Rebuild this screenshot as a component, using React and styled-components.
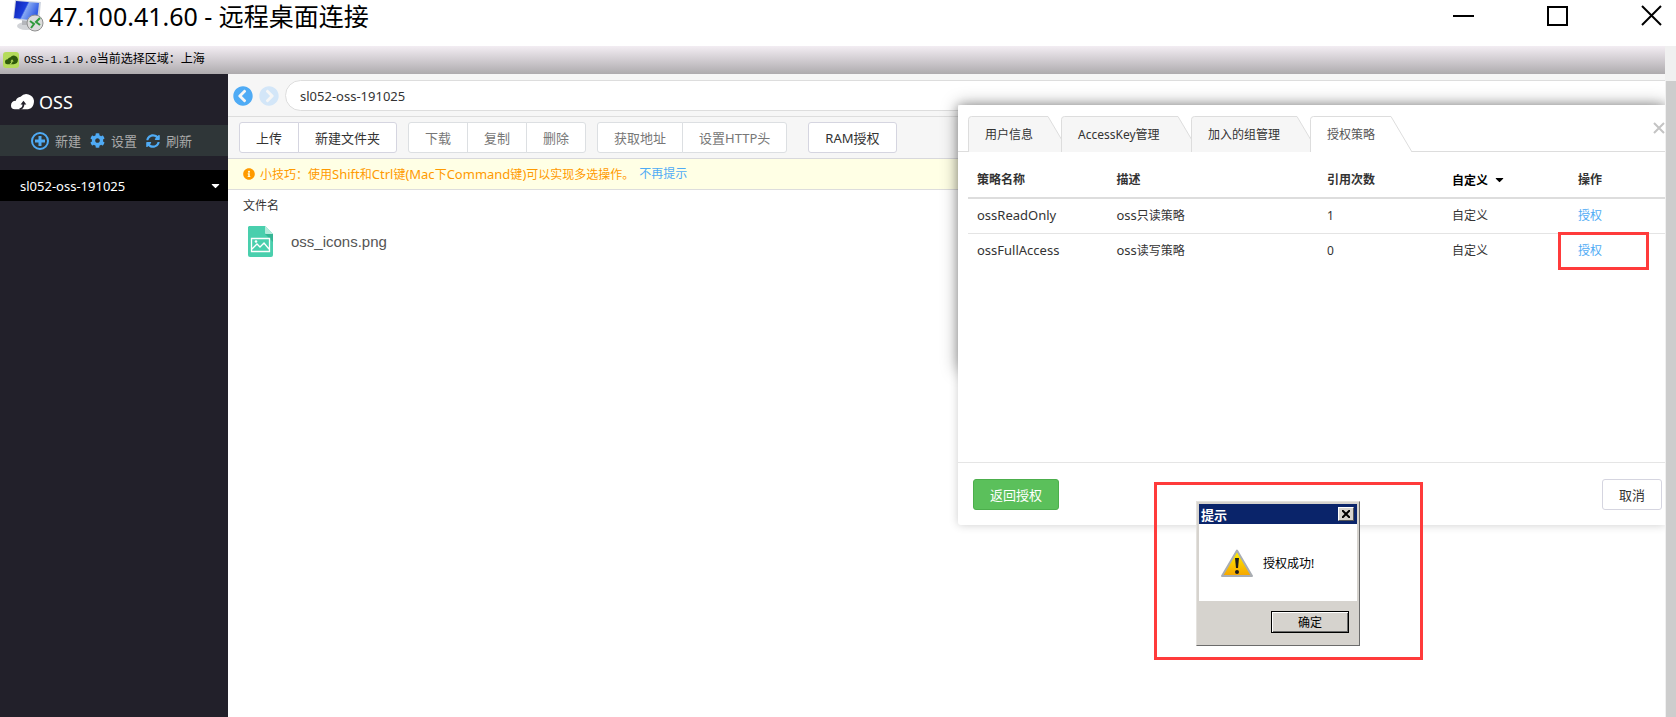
import React, { Component } from 'react'
import styled, { createGlobalStyle, css } from 'styled-components'
import { FaInfoCircle, FaChevronCircleLeft, FaChevronCircleRight, FaCog, FaSyncAlt, FaCaretDown } from 'react-icons/fa'

const sans = '"Noto Sans", "Noto Sans CJK SC", sans-serif'
const song = '"Liberation Mono", "Noto Sans CJK SC", monospace'

const buttonGroups = [
    { id: 'create', items: ['上传', '新建文件夹'] },
    { id: 'file', disabled: true, items: ['下载', '复制', '删除'] },
    { id: 'meta', disabled: true, items: ['获取地址', '设置HTTP头'] },
    { id: 'ram', wide: true, items: ['RAM授权'] }
]

const tabs = [
    { id: 'user', title: '用户信息', width: 100 },
    { id: 'key', title: 'AccessKey管理', width: 137 },
    { id: 'group', title: '加入的组管理', width: 126 },
    { id: 'policy', title: '授权策略', width: 101 }
]

const policies = [
    { name: 'ossReadOnly', desc: '只读策略', count: 1 },
    { name: 'ossFullAccess', desc: '读写策略', count: 0, marked: true }
]

const RemoteIcon = () => (
    <svg width="34" height="34" viewBox="0 0 34 34" aria-hidden="true">
        <defs>
            <linearGradient id="screen" x1="0" y1="0" x2="1" y2="0.4">
                <stop offset="0" stopColor="#0d1fb0" />
                <stop offset="0.5" stopColor="#1c3fdc" />
                <stop offset="0.56" stopColor="#86a8f2" />
                <stop offset="1" stopColor="#2f5ae4" />
            </linearGradient>
        </defs>
        <ellipse cx="14" cy="27" rx="9" ry="4" fill="#d2d4d8" />
        <path d="M10 20h9v6h-9z" fill="#b4b6bb" />
        <path d="M3 1l26 2-2 21L1 20z" fill="#cfd5e0" />
        <path d="M4 2l23 2-2 18L2 19z" fill="url(#screen)" />
        <circle cx="23" cy="24" r="8" fill="#dcdcdc" stroke="#8f8f8f" />
        <path d="M18 22l4 3-3 4M28 19l-4 4 4 3" fill="none" stroke="#2f9a3c" strokeWidth="2" />
    </svg>
)

const CloudIcon = ({ width, color, arrow }) => (
    <svg width={width} viewBox="0 0 24 18" aria-hidden="true">
        <path d="M4 17a4 4 0 0 1-4-4c0-3 2-5 5-5a6 6 0 0 1 5-4 8 8 0 0 1 14 4c0 6-3 9-8 9z" fill={color} />
        <path d="M13 11c0 4-1 5-4 6" fill="none" stroke={arrow} strokeWidth="2" />
        <path d="M13 8l3 4h-6z" fill={arrow} />
    </svg>
)

const PlusIcon = () => (
    <svg width="18" height="18" viewBox="0 0 18 18" aria-hidden="true">
        <circle cx="9" cy="9" r="8" fill="none" stroke="#4fabf5" strokeWidth="2" />
        <path d="M9 4v10M4 9h10" stroke="#4fabf5" strokeWidth="3" />
    </svg>
)

const ImageFileIcon = () => (
    <svg width="25" height="31" viewBox="0 0 25 31" aria-hidden="true">
        <path d="M1 0h16l8 8v21a2 2 0 0 1-2 2H2a2 2 0 0 1-2-2V1z" fill="#49cfad" />
        <path d="M17 8h8v8z" fill="#35b594" />
        <path d="M17 0l8 8h-7a1 1 0 0 1-1-1z" fill="#b5ebdc" />
        <path d="M3.500 12.500h18v13h-18zM4 23l5-5 3 3 4-4 5 6" fill="none" stroke="#fff" strokeWidth="1.300" />
        <circle cx="8" cy="15.500" r="1.300" fill="#fff" />
    </svg>
)

const WarningIcon = () => (
    <svg width="32" height="28" viewBox="0 0 32 28" aria-hidden="true">
        <defs>
            <linearGradient id="warn" x1="0" y1="0" x2="0" y2="1">
                <stop offset="0" stopColor="#fff200" />
                <stop offset="1" stopColor="#f5a400" />
            </linearGradient>
        </defs>
        <path d="M16 1.500L31 27H1z" fill="url(#warn)" stroke="#a9adb3" strokeWidth="2" strokeLinejoin="round" />
        <path d="M14 9h4l-1 10h-2z" fill="#1b1b1b" />
        <circle cx="16" cy="23" r="2" fill="#1b1b1b" />
    </svg>
)

const TabShape = ({ width, active }) => (
    <TabSvg width={width + 10} height="36" viewBox={`0 0 ${width + 10} 36`} aria-hidden="true">
        <path
            d={`M.5 36V3.500a3 3 0 0 1 3-3H${width - 20}L${width + 1} 36`}
            fill={active ? '#fff' : '#f6f6f6'}
            stroke="#ddd"
        />
    </TabSvg>
)

class App extends Component {
    constructor(props) {
        super(props)
        this.state = {
            activeTab: 'policy',
            alertOpen: true,
            tipOpen: true
        }
        this.closeAlert = this.closeAlert.bind(this)
        this.hideTip = this.hideTip.bind(this)
    }

    closeAlert() {
        this.setState({ alertOpen: false })
    }

    hideTip(e) {
        e.preventDefault()
        this.setState({ tipOpen: false })
    }

    renderPolicyDialog() {
        const { activeTab } = this.state
        return (
            <Modal role="dialog" aria-label="RAM授权">
                <TabBar role="tablist">
                    {tabs.map(tab => (
                        <Tab
                            key={tab.id}
                            role="tab"
                            aria-selected={tab.id === activeTab}
                            $width={tab.width}
                            $active={tab.id === activeTab}
                            onClick={() => this.setState({ activeTab: tab.id })}
                        >
                            <TabShape width={tab.width} active={tab.id === activeTab} />
                            <TabTitle>{tab.title}</TabTitle>
                        </Tab>
                    ))}
                    <ModalClose aria-label="关闭">
                        <svg width="12" height="12" viewBox="0 0 12 12">
                            <path d="M1 1l10 10M11 1L1 11" stroke="#c4c4c4" strokeWidth="2" />
                        </svg>
                    </ModalClose>
                </TabBar>
                <ModalBody>
                    <PolicyTable>
                        <colgroup>
                            <Col $width="20%" />
                            <Col />
                            <Col $width="125px" />
                            <Col $width="126px" />
                            <Col $width="96px" />
                        </colgroup>
                        <thead>
                            <tr>
                                <th>策略名称</th>
                                <th>描述</th>
                                <th>引用次数</th>
                                <th><SortButton>自定义 <FaCaretDown size={13} /></SortButton></th>
                                <th>操作</th>
                            </tr>
                        </thead>
                        <tbody>
                            {policies.map(policy => (
                                <tr key={policy.name}>
                                    <td><Latin>{policy.name}</Latin></td>
                                    <td><Latin>oss</Latin>{policy.desc}</td>
                                    <td>{policy.count}</td>
                                    <td>自定义</td>
                                    <td>
                                        <Link href="#grant">授权</Link>
                                        {policy.marked && <RowMark />}
                                    </td>
                                </tr>
                            ))}
                        </tbody>
                    </PolicyTable>
                </ModalBody>
                <ModalFooter>
                    <Button $primary>返回授权</Button>
                    <Button>取消</Button>
                </ModalFooter>
            </Modal>
        )
    }

    renderAlert() {
        return (
            <AlertMark>
                <Alert role="alertdialog" aria-label="提示">
                    <AlertTitle>
                        <span>提示</span>
                        <AlertClose aria-label="关闭" onClick={this.closeAlert}>
                            <svg width="8" height="8" viewBox="0 0 8 8">
                                <path d="M0 0l8 8M8 0L0 8" stroke="#000" strokeWidth="2" />
                            </svg>
                        </AlertClose>
                    </AlertTitle>
                    <AlertBody>
                        <WarningIcon />
                        <span>授权成功!</span>
                    </AlertBody>
                    <AlertFooter>
                        <AlertButton onClick={this.closeAlert}>确定</AlertButton>
                    </AlertFooter>
                </Alert>
            </AlertMark>
        )
    }

    render() {
        const { alertOpen, tipOpen } = this.state
        return (
            <Desktop>
                <GlobalStyle />
                <TitleBar>
                    <RemoteIcon />
                    <WindowTitle>47.100.41.60 - 远程桌面连接</WindowTitle>
                    <WindowControls>
                        <WindowButton aria-label="最小化">
                            <svg width="22" height="22" viewBox="0 0 22 22"><path d="M0 11h21" stroke="#000" strokeWidth="2" /></svg>
                        </WindowButton>
                        <WindowButton aria-label="最大化">
                            <svg width="22" height="22" viewBox="0 0 22 22"><path d="M1 2h19v18H1z" fill="none" stroke="#000" strokeWidth="2" /></svg>
                        </WindowButton>
                        <WindowButton aria-label="关闭">
                            <svg width="22" height="22" viewBox="0 0 22 22"><path d="M1 1l19 19M20 1L1 20" stroke="#000" strokeWidth="2" /></svg>
                        </WindowButton>
                    </WindowControls>
                </TitleBar>
                <Session>
                    <Client>
                        <AppBar>
                            <AppBadge><CloudIcon width={13} color="#2e5a0c" arrow="#b5dc5c" /></AppBadge>
                            <span><Mono>OSS-1.1.9.0</Mono>当前选择区域：上海</span>
                        </AppBar>
                        <Workspace>
                            <Sidebar>
                                <Brand><CloudIcon width={23} color="#fff" arrow="#22202a" />OSS</Brand>
                                <SideTools>
                                    <SideTool><PlusIcon />新建</SideTool>
                                    <SideTool><FaCog size={15} />设置</SideTool>
                                    <SideTool><FaSyncAlt size={14} />刷新</SideTool>
                                </SideTools>
                                <Bucket>sl052-oss-191025<FaCaretDown size={13} /></Bucket>
                            </Sidebar>
                            <Content>
                                <NavBar>
                                    <NavButton aria-label="后退"><FaChevronCircleLeft size={20} /></NavButton>
                                    <NavButton aria-label="前进" disabled><FaChevronCircleRight size={20} /></NavButton>
                                    <Address aria-label="路径" defaultValue="sl052-oss-191025" />
                                </NavBar>
                                <Toolbar>
                                    {buttonGroups.map(group => (
                                        <ButtonGroup key={group.id} $wide={group.wide}>
                                            {group.items.map(item => (
                                                <Button key={item} disabled={group.disabled}>{item}</Button>
                                            ))}
                                        </ButtonGroup>
                                    ))}
                                </Toolbar>
                                {tipOpen && <Tip>
                                    <FaInfoCircle size={12} />
                                    <span>
                                        小技巧：使用<Latin>Shift</Latin>和<Latin>Ctrl</Latin>键<Latin>(Mac</Latin>下<Latin>Command</Latin>键<Latin>)</Latin>可以实现多选操作。
                                    </span>
                                    <Link href="#hide" onClick={this.hideTip}>不再提示</Link>
                                </Tip>}
                                <FileHead>文件名</FileHead>
                                <FileRow>
                                    <ImageFileIcon />
                                    <span>oss_icons.png</span>
                                </FileRow>
                            </Content>
                        </Workspace>
                        <ModalBehind />
                        {this.renderPolicyDialog()}
                        {alertOpen && this.renderAlert()}
                    </Client>
                    <ScrollTrack><ScrollThumb /></ScrollTrack>
                </Session>
            </Desktop>
        )
    }
}

const GlobalStyle = createGlobalStyle`
    * {
        box-sizing: border-box;
    }
    body {
        margin: 0;
        background: #fff;
        color: #333;
        font-family: ${sans};
        font-size: 12px;
    }
    button, input {
        font-family: inherit;
        font-size: inherit;
    }
    svg {
        display: block;
        flex: none;
    }
`

const Desktop = styled.div`
    display: flex;
    flex-direction: column;
    min-height: 100vh;
`

const TitleBar = styled.header`
    display: flex;
    align-items: center;
    height: 46px;
    padding: 0 13px 14px 12px;
`

const WindowTitle = styled.h1`
    flex: 1;
    margin: 0 0 0 3px;
    font-size: 25px;
    line-height: 32px;
    font-weight: 400;
    color: #000;
`

const WindowControls = styled.div`
    display: flex;
    gap: 72px;
`

const WindowButton = styled.button`
    padding: 0;
    border: 0;
    background: none;
`

const Session = styled.div`
    display: flex;
    flex: 1;
`

const Client = styled.div`
    display: flex;
    flex-direction: column;
    position: relative;
    flex: 1;
    min-width: 0;
    overflow: hidden;
`

const ScrollTrack = styled.div`
    width: 11px;
    padding-top: 35px;
    background: #f0f0f0;
`

const ScrollThumb = styled.div`
    height: 100%;
    margin-left: 1px;
    background: #cdcdcd;
`

const AppBar = styled.div`
    display: flex;
    align-items: center;
    gap: 5px;
    height: 28px;
    padding-left: 3px;
    background: linear-gradient(#f3edf3, #aeabae);
    color: #000;
    line-height: 16px;
    font-family: ${song};
`

const Mono = styled.span`
    font-size: 11px;
`

const AppBadge = styled.span`
    display: flex;
    align-items: center;
    justify-content: center;
    width: 16px;
    height: 16px;
    border-radius: 3px;
    background: #b5dc5c;
`

const Workspace = styled.div`
    display: flex;
    flex: 1;
`

const Sidebar = styled.aside`
    width: 228px;
    background: #22202a;
`

const Brand = styled.div`
    display: flex;
    align-items: center;
    gap: 5px;
    height: 51px;
    padding: 4px 0 0 11px;
    color: #fff;
    font-size: 18px;
`

const SideTools = styled.div`
    display: flex;
    align-items: center;
    gap: 9px;
    height: 31px;
    margin-bottom: 14px;
    padding-left: 31px;
    background: #2f3638;
`

const SideTool = styled.button`
    display: flex;
    align-items: center;
    gap: 6px;
    padding: 0;
    border: 0;
    background: none;
    color: #aaa;
    font-size: 13px;

    svg {
        color: #4fabf5;
    }
`

const Bucket = styled.div`
    display: flex;
    align-items: center;
    justify-content: space-between;
    height: 31px;
    padding: 0 6px 0 20px;
    background: #000;
    color: #fff;
    font-size: 13px;
`

const Content = styled.main`
    flex: 1;
    min-width: 0;
`

const NavBar = styled.div`
    display: flex;
    align-items: center;
    gap: 6px;
    height: 43px;
    padding: 1px 0 0 5px;
    border-bottom: 1px solid #ddd;
    background: #f6f6f6;
`

const NavButton = styled.button`
    padding: 0;
    border: 0;
    background: none;
    color: #4fabf5;

    &:disabled {
        color: #d3e6f8;
    }
`

const Address = styled.input`
    flex: 1;
    height: 31px;
    margin-right: -20px;
    padding: 0 14px;
    border: 1px solid #ddd;
    border-radius: 16px;
    background: #fff;
    color: #333;
    font-size: 13px;
`

const Toolbar = styled.div`
    display: flex;
    align-items: center;
    gap: 11px;
    height: 42px;
    padding-left: 11px;
    border-bottom: 1px solid #d8d8dc;
    background: #f6f6f6;
`

const Button = styled.button`
    height: 31px;
    padding: 0 16px;
    border: 1px solid #d5d5e0;
    border-radius: 3px;
    background: #fff;
    color: #333;
    font-size: 13px;
    white-space: nowrap;

    &:disabled {
        border-color: #dcdfe2;
        color: #777;
    }

    ${props => props.$primary && css`
        border-color: #4cae4c;
        background: #5bc05b;
        color: #fff;
    `}
`

const ButtonGroup = styled.div`
    display: flex;
    margin-left: ${props => props.$wide ? '10px' : '0'};

    ${Button}:not(:first-child) {
        margin-left: -1px;
        border-top-left-radius: 0;
        border-bottom-left-radius: 0;
    }
    ${Button}:not(:last-child) {
        border-top-right-radius: 0;
        border-bottom-right-radius: 0;
    }
`

const Latin = styled.span`
    font-size: 13px;
`

const Tip = styled.div`
    display: flex;
    align-items: center;
    gap: 5px;
    height: 31px;
    padding-left: 15px;
    border-bottom: 1px solid #ddd;
    background: #ffffe5;
    color: #ff9a00;
    line-height: 18px;
    white-space: nowrap;
`

const Link = styled.a`
    color: #4fabf5;
    text-decoration: none;
`

const FileHead = styled.div`
    padding: 7px 15px 5px;
    line-height: 18px;
`

const FileRow = styled.div`
    display: flex;
    align-items: center;
    gap: 18px;
    padding: 6px 20px;
    color: #555;
    font-family: "Liberation Sans", "Noto Sans CJK SC", sans-serif;
    font-size: 15px;
`

const Modal = styled.section`
    display: flex;
    flex-direction: column;
    position: absolute;
    top: 59px;
    left: 958px;
    right: 0;
    min-height: 420px;
    border-radius: 3px 0 0 3px;
    background: #fff;
    box-shadow: 0 0 10px rgba(0, 0, 0, 0.2);
`

// first dialog stays open under the policy one, only its shadow shows
const ModalBehind = styled.div`
    position: absolute;
    top: 59px;
    left: 958px;
    right: 0;
    height: 265px;
    box-shadow: 0 0 16px rgba(0, 0, 0, 0.4);
`

const TabBar = styled.div`
    display: flex;
    height: 47px;
    padding: 11px 0 0 10px;
    border-bottom: 1px solid #ddd;
`

const Tab = styled.button`
    position: relative;
    z-index: ${props => props.$active ? 1 : 0};
    width: ${props => props.$width}px;
    height: 36px;
    padding: 0 0 0 17px;
    margin-right: -7px;
    border: 0;
    background: none;
    color: ${props => props.$active ? '#555' : '#333'};
    text-align: left;
    white-space: nowrap;
`

const TabSvg = styled.svg`
    position: absolute;
    top: 0;
    left: 0;
`

const TabTitle = styled.span`
    position: relative;
`

const ModalClose = styled.button`
    height: 24px;
    margin-left: auto;
    padding: 0;
    border: 0;
    background: none;
`

const ModalBody = styled.div`
    flex: 1;
    padding: 10px 0 0 10px;
`

const PolicyTable = styled.table`
    width: 100%;
    border-collapse: collapse;
    table-layout: fixed;

    th, td {
        position: relative;
        height: 35px;
        padding: 0 9px;
        line-height: 18px;
        text-align: left;
    }
    th {
        height: 36px;
        border-bottom: 2px solid #ddd;
        font-weight: 700;
    }
    tbody tr:first-child td {
        border-bottom: 1px solid #e4e4e4;
    }
`

const Col = styled.col`
    width: ${props => props.$width || 'auto'};
`

const SortButton = styled.button`
    display: flex;
    align-items: center;
    gap: 5px;
    padding: 0;
    border: 0;
    background: none;
    color: #000;
    font-weight: 700;
`

const RowMark = styled.div`
    position: absolute;
    inset: -2px 16px -2px -11px;
    border: 3px solid #ff3b3b;
    pointer-events: none;
`

const ModalFooter = styled.div`
    display: flex;
    justify-content: space-between;
    padding: 16px 3px 15px 15px;
    border-top: 1px solid #e5e5e5;
`

const AlertMark = styled.div`
    display: flex;
    align-items: flex-start;
    position: absolute;
    top: 436px;
    right: 242px;
    width: 269px;
    height: 178px;
    padding: 16px 0 0 39px;
    border: 3px solid #ff3b3b;
`

const Alert = styled.section`
    width: 164px;
    padding: 2px;
    border: 1px solid;
    border-color: #e4e2de #6b6b6b #6b6b6b #e4e2de;
    background: #d6d3ce;
    color: #000;
`

const AlertTitle = styled.div`
    display: flex;
    align-items: center;
    justify-content: space-between;
    height: 20px;
    padding: 0 3px 0 2px;
    background: #0a246a;
    color: #fff;
    font-size: 13px;
    font-weight: 700;
`

const AlertClose = styled.button`
    display: flex;
    align-items: center;
    justify-content: center;
    width: 16px;
    height: 14px;
    padding: 0;
    border: 1px solid;
    border-color: #fff #555 #555 #fff;
    background: #d6d3ce;
`

const AlertBody = styled.div`
    display: flex;
    align-items: center;
    gap: 10px;
    height: 77px;
    padding-left: 22px;
    background: #fff;
`

const AlertFooter = styled.div`
    display: flex;
    justify-content: flex-end;
    padding: 10px 8px;
`

const AlertButton = styled.button`
    width: 78px;
    height: 22px;
    padding: 0;
    border: 1px solid #000;
    background: #d6d3ce;
    box-shadow: inset 1px 1px #fff, inset -1px -1px #6b6b6b;
    color: #000;
`

export default App
